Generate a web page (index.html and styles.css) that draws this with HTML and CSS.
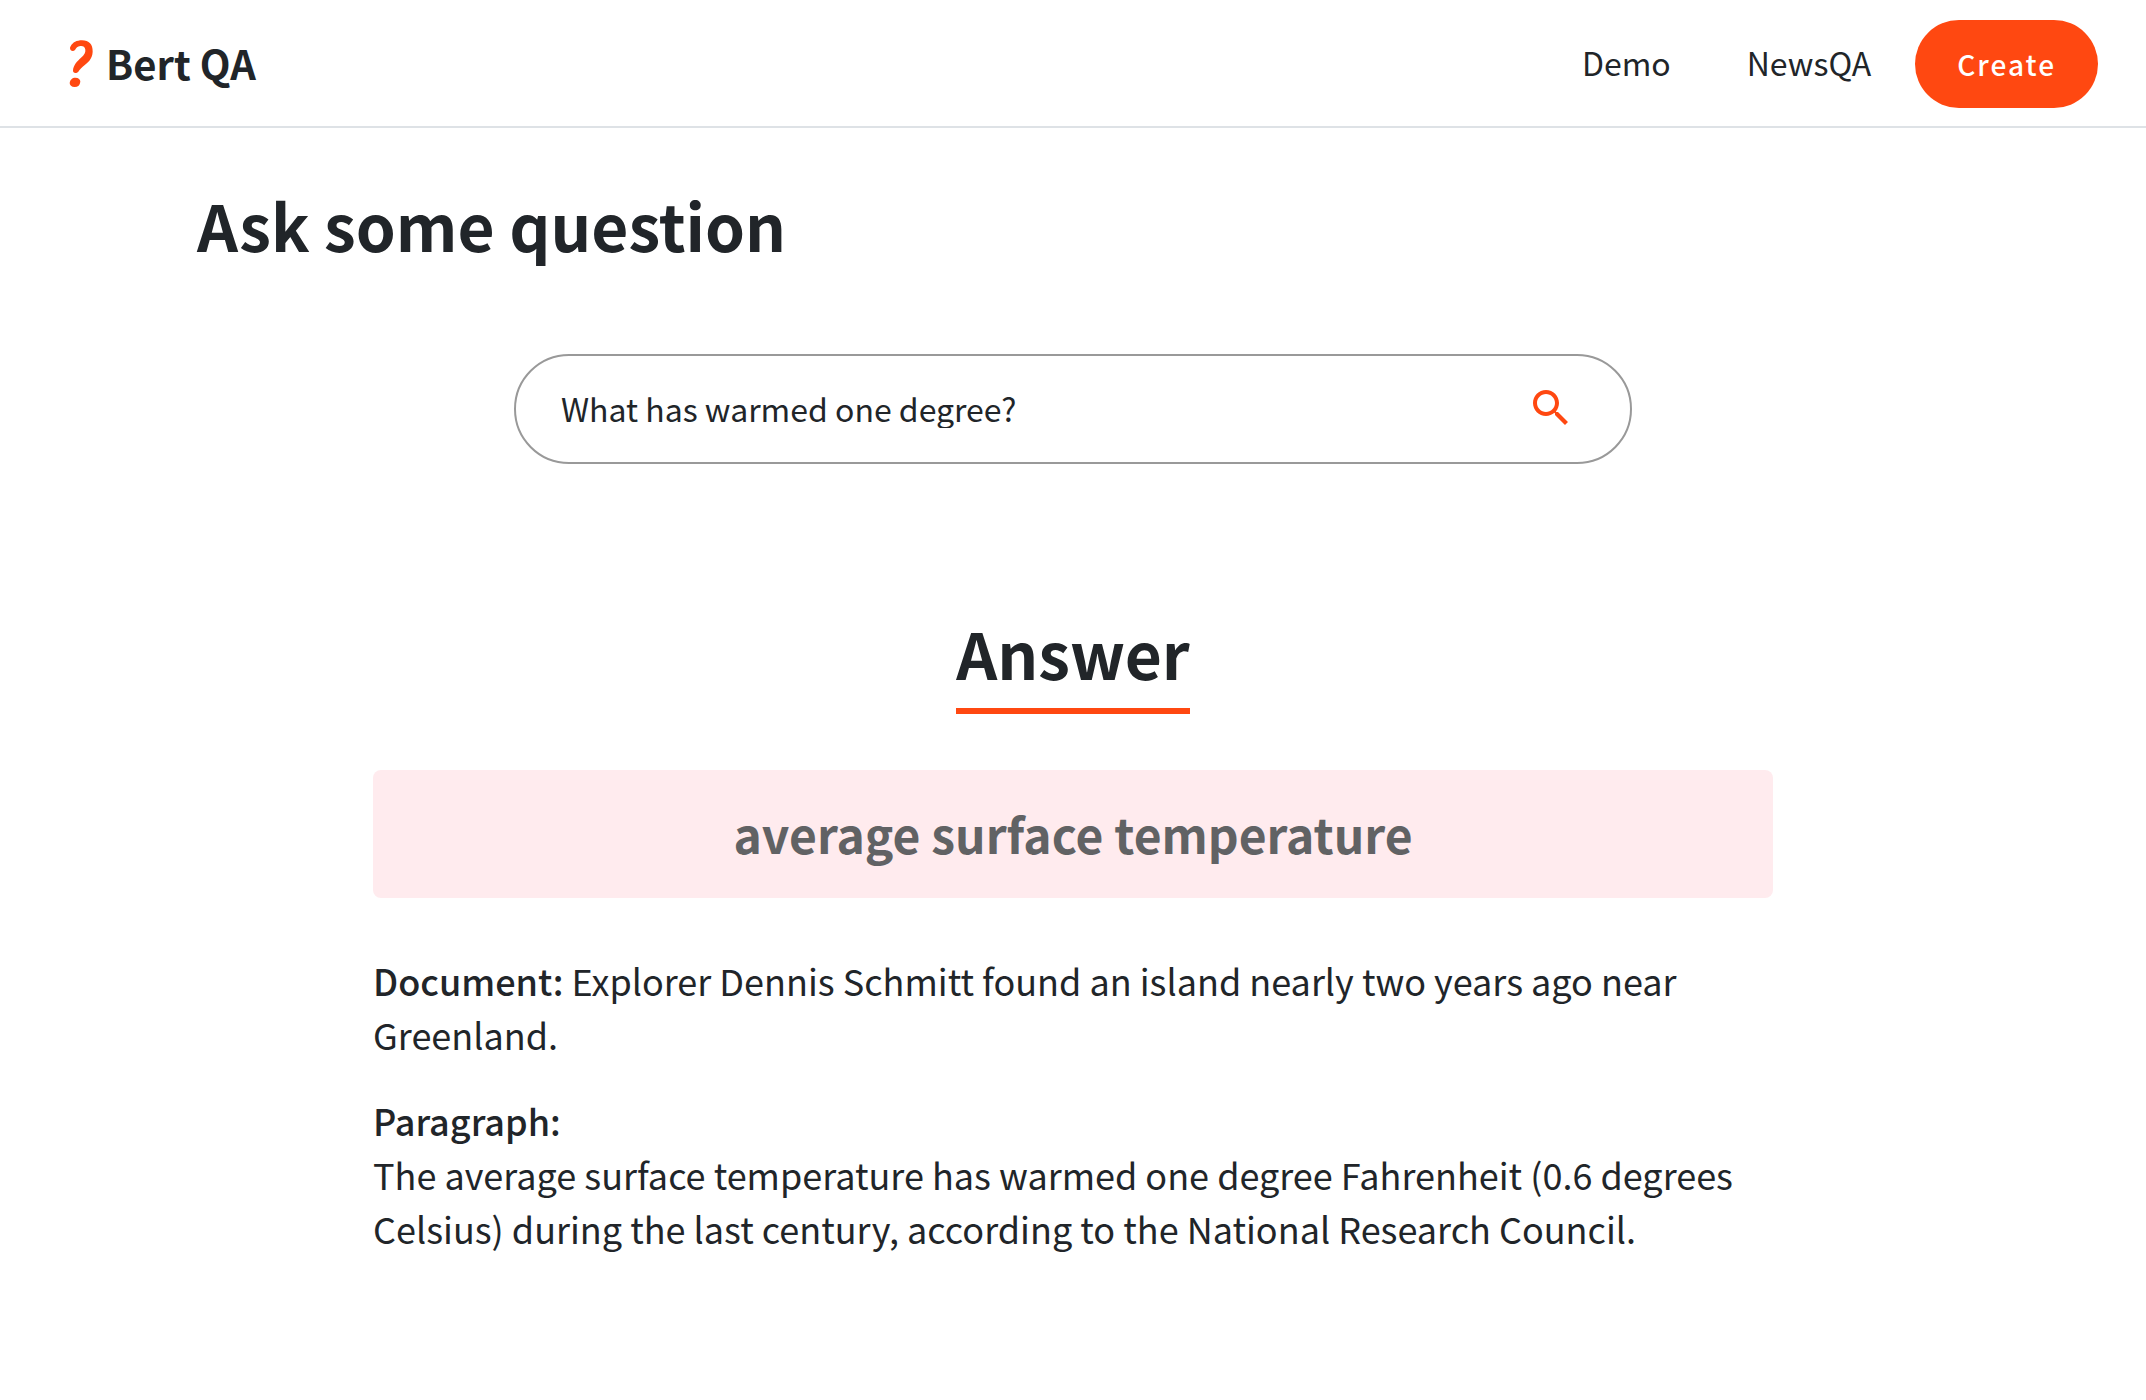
FILE: index.html
```html
<!DOCTYPE html>
<html lang="en">
<head>
  <meta charset="utf-8">
  <meta name="viewport" content="width=device-width, initial-scale=1">
  <title>Bert QA</title>
  <link rel="stylesheet" href="styles.css">
</head>
<body>
  <header class="header">
    <a class="brand" href="#">
      <svg class="brand-icon" viewBox="84 114 78 150" aria-hidden="true">
        <path d="M92 136C98 124 110 118 126 118C147 118 159 130 158 152C157 175 143 185 128 197C119 205 118 208 115 212C110 218 98 218 99 208C100 192 112 180 123 170C133 161 137 155 136 146C135 137 128 134 121 135C112 136 109 141 105 147C99 154 90 149 90 141C90 139 91 138 92 136Z"/>
        <path d="M106 230C116 230 121 235 121 242C120 252 114 258 104 258C94 258 89 253 89 246C90 236 97 230 106 230Z"/>
      </svg>
      <span class="brand-name">Bert QA</span>
    </a>
    <nav class="nav">
      <a class="nav-link" href="#">Demo</a>
      <a class="nav-link" href="#">NewsQA</a>
      <button class="create" type="button">Create</button>
    </nav>
  </header>
  <main class="main">
    <h1 class="title">Ask some question</h1>
    <form class="search" role="search">
      <input class="search-input" type="text" aria-label="Question" value="What has warmed one degree?">
      <button class="search-button" type="button" aria-label="Search">
        <svg class="search-icon" viewBox="0 0 24 24" aria-hidden="true">
          <path d="M15.5 14h-.79l-.28-.27C15.41 12.59 16 11.11 16 9.5 16 5.91 13.09 3 9.5 3S3 5.91 3 9.5 5.91 16 9.5 16c1.61 0 3.09-.59 4.23-1.57l.27.28v.79l5 4.99L20.49 19l-4.99-5zm-6 0C7.01 14 5 11.99 5 9.5S7.01 5 9.5 5 14 7.01 14 9.5 11.99 14 9.5 14z"/>
        </svg>
      </button>
    </form>
    <section class="result">
      <h2 class="result-title">Answer</h2>
      <p class="answer">average surface temperature</p>
      <div class="details">
        <p class="detail"><strong class="label">Document:</strong> Explorer Dennis Schmitt found an island nearly two years ago near Greenland.</p>
        <p class="detail"><strong class="label">Paragraph:</strong><br>The average surface temperature has warmed one degree Fahrenheit (0.6 degrees Celsius) during the last century, according to the National Research Council.</p>
      </div>
    </section>
  </main>
</body>
</html>
```
FILE: styles.css
```css
* {
  box-sizing: border-box;
}

body {
  margin: 0;
  background: #fff;
  color: #212529;
  font-family: "Noto Sans CJK KR", "Noto Sans", sans-serif;
  font-size: 36px;
  line-height: 54px;
}

h1,
h2,
p {
  margin: 0;
}

a {
  color: inherit;
  text-decoration: none;
}

button,
input {
  border: 0;
  font-family: inherit;
}

.header {
  display: flex;
  align-items: center;
  justify-content: space-between;
  padding: 20px 48px 18px 68px;
  border-bottom: 2px solid #dee2e6;
}

.brand {
  display: flex;
  align-items: center;
  gap: 12px;
}

.brand-icon {
  width: 26px;
  height: 50px;
  fill: #ff4811;
}

.brand-name {
  padding-bottom: 2px;
  font-size: 40px;
  font-weight: 700;
}

.nav {
  display: flex;
  align-items: center;
}

.nav-link {
  margin-right: 44px;
  padding-bottom: 4px;
  font-size: 32px;
}

.nav-link:first-child {
  margin-right: 76px;
}

.create {
  height: 88px;
  padding: 0 42px;
  border-radius: 44px;
  background: #ff4811;
  color: #fff;
  font-size: 28px;
  font-weight: 500;
  letter-spacing: 2px;
}

.main {
  max-width: 1752px;
  margin: 0 auto;
  padding: 58px 0;
}

.title,
.result-title {
  font-size: 64px;
  font-weight: 700;
  line-height: 76px;
}

.search {
  display: flex;
  align-items: center;
  justify-content: space-between;
  max-width: 1118px;
  height: 110px;
  margin: 92px auto 150px;
  padding: 0 55px 2px 45px;
  border: 2px solid #999;
  border-radius: 55px;
}

.search-input {
  flex: 1;
  min-width: 0;
  height: 40px;
  padding: 0;
  background: none;
  color: inherit;
  font-size: 32px;
  outline: 0;
}

.search-button {
  display: flex;
  padding: 0;
  background: none;
}

.search-icon {
  width: 48px;
  height: 48px;
  fill: #ff4811;
}

.result {
  display: flex;
  flex-direction: column;
  align-items: center;
  max-width: 1400px;
  margin: 0 auto;
}

.result-title {
  padding-bottom: 18px;
  border-bottom: 6px solid #ff4811;
}

.answer {
  width: 100%;
  margin: 56px 0 55px;
  padding: 28px 28px 30px;
  border-radius: 8px;
  background: #ffebee;
  color: #616264;
  font-size: 48px;
  font-weight: 700;
  line-height: 70px;
  text-align: center;
}

.details {
  display: flex;
  flex-direction: column;
  gap: 32px;
  width: 100%;
}

.label {
  font-weight: 500;
}
```
